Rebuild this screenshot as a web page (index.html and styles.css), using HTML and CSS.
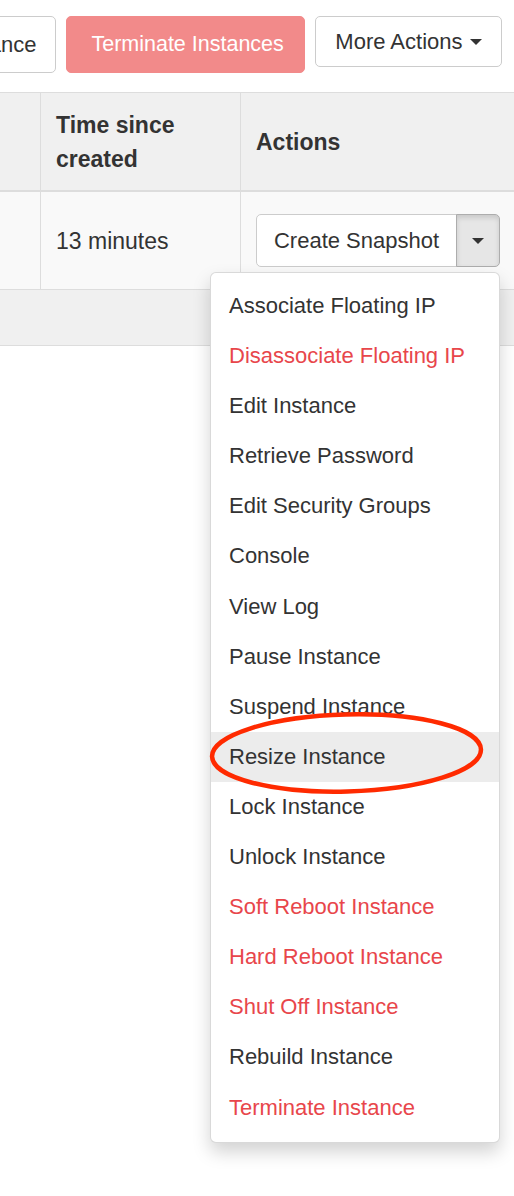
FILE: index.html
```html
<!DOCTYPE html>
<html lang="en">
<head>
<meta charset="utf-8">
<title>Instances</title>
<link rel="stylesheet" href="styles.css">
</head>
<body>
<div class="toolbar">
  <button class="btn btn-tall">Launch Instance</button>
  <button class="btn btn-tall btn-danger">Terminate Instances</button>
  <button class="btn btn-short btn-more">More Actions <span class="caret"></span></button>
</div>
<table class="instances">
  <thead>
    <tr>
      <th class="col-a"></th>
      <th class="col-b">Time since created</th>
      <th class="col-c">Actions</th>
    </tr>
  </thead>
  <tbody>
    <tr>
      <td class="col-a"></td>
      <td class="col-b">13 minutes</td>
      <td class="col-c">
        <div class="btn-group">
          <button class="btn split-main">Create Snapshot</button>
          <button class="btn split-toggle"><span class="caret"></span></button>
          <ul class="dropdown-menu">
            <li><a href="#">Associate Floating IP</a></li>
            <li><a href="#" class="danger">Disassociate Floating IP</a></li>
            <li><a href="#">Edit Instance</a></li>
            <li><a href="#">Retrieve Password</a></li>
            <li><a href="#">Edit Security Groups</a></li>
            <li><a href="#">Console</a></li>
            <li><a href="#">View Log</a></li>
            <li><a href="#">Pause Instance</a></li>
            <li><a href="#">Suspend Instance</a></li>
            <li><a href="#" class="hover">Resize Instance<svg class="mark" width="280" height="86" viewBox="0 0 280 86"><ellipse cx="138.5" cy="41" rx="134.5" ry="38.5" transform="rotate(-1.5 138.5 41)" fill="none" stroke="#ff2a00" stroke-width="4.5"/></svg></a></li>
            <li><a href="#">Lock Instance</a></li>
            <li><a href="#">Unlock Instance</a></li>
            <li><a href="#" class="danger">Soft Reboot Instance</a></li>
            <li><a href="#" class="danger">Hard Reboot Instance</a></li>
            <li><a href="#" class="danger">Shut Off Instance</a></li>
            <li><a href="#">Rebuild Instance</a></li>
            <li><a href="#" class="danger">Terminate Instance</a></li>
          </ul>
        </div>
      </td>
    </tr>
  </tbody>
  <tfoot>
    <tr>
      <td colspan="3" class="foot"><div class="foot-spacer"></div></td>
    </tr>
  </tfoot>
</table>
</body>
</html>
```

FILE: styles.css
```css
html, body {
  margin: 0;
  padding: 0;
  background: #fff;
}

body {
  font-family: "Liberation Sans", Arial, sans-serif;
  color: #333;
  min-height: 1196px;
}

.toolbar {
  display: flex;
  justify-content: flex-end;
  align-items: flex-start;
  gap: 10px;
  padding: 16px 12px 0 0;
  height: 76px;
  overflow: hidden;
}

.btn {
  font-family: "Liberation Sans", Arial, sans-serif;
  font-size: 22px;
  color: #333;
  background: #fff;
  border: 1px solid #ccc;
  border-radius: 5px;
  padding: 0 19px;
  display: flex;
  align-items: center;
  white-space: nowrap;
  flex-shrink: 0;
  box-sizing: border-box;
  margin: 0;
  cursor: pointer;
}

.btn-tall {
  height: 57px;
}

.btn-short {
  height: 51px;
}

.btn-danger {
  background: #f28a8a;
  border-color: #f28a8a;
  color: #fff;
  font-size: 21.5px;
  padding: 0 20px 0 24px;
}

.btn-more {
  padding: 0 19.5px;
}

.caret {
  display: inline-block;
  width: 0;
  height: 0;
  border-top: 6px solid #333;
  border-left: 6.5px solid transparent;
  border-right: 6.5px solid transparent;
}

.btn-more .caret {
  margin-left: 7px;
}

.instances {
  width: 100%;
  border-collapse: separate;
  border-spacing: 0;
  table-layout: fixed;
  font-size: 23px;
}

.instances th,
.instances td {
  box-sizing: border-box;
}

.col-a {
  width: 40px;
}

.col-b {
  width: 200px;
  border-left: 1px solid #ddd;
}

.col-c {
  border-left: 1px solid #ddd;
}

.instances thead th {
  background: #f0f0f0;
  border-top: 1px solid #ddd;
  border-bottom: 2px solid #ddd;
  text-align: left;
  font-weight: bold;
  line-height: 34px;
  padding: 14.5px 15px;
  vertical-align: middle;
}

.instances tbody td {
  background: #f9f9f9;
  border-bottom: 1px solid #ddd;
  padding: 22px 15px;
  line-height: 34px;
  vertical-align: middle;
}

.instances .col-a {
  padding-left: 0;
  padding-right: 0;
}

.instances tfoot .foot {
  background: #f0f0f0;
  border-bottom: 1px solid #ddd;
  padding: 0;
}

.foot-spacer {
  height: 55px;
}

.btn-group {
  position: relative;
  display: flex;
  width: max-content;
  z-index: 5;
}

.split-main {
  width: 201px;
  height: 53px;
  justify-content: center;
  border-radius: 5px 0 0 5px;
}

.split-toggle {
  width: 44px;
  height: 53px;
  margin-left: -1px;
  padding: 0;
  justify-content: center;
  border-radius: 0 5px 5px 0;
  background: #e6e6e6;
  border-color: #adadad;
  box-shadow: inset 0 3px 5px rgba(0, 0, 0, 0.125);
}

.dropdown-menu {
  position: absolute;
  top: calc(100% + 5px);
  right: 0;
  width: 290px;
  margin: 0;
  padding: 8px 0 9px;
  list-style: none;
  background: #fff;
  border: 1px solid rgba(0, 0, 0, 0.15);
  border-radius: 6px;
  box-shadow: 0 9px 18px rgba(0, 0, 0, 0.175);
  box-sizing: border-box;
  z-index: 10;
  font-size: 22px;
  line-height: 50.1px;
}

.dropdown-menu a {
  display: block;
  height: 50.1px;
  padding: 0 18px;
  color: #333;
  text-decoration: none;
  white-space: nowrap;
}

.dropdown-menu a.danger {
  color: #e8464b;
}

.dropdown-menu a.hover {
  position: relative;
  background: #ececec;
}

.mark {
  position: absolute;
  left: -3px;
  top: -20px;
  overflow: visible;
  pointer-events: none;
}
```
